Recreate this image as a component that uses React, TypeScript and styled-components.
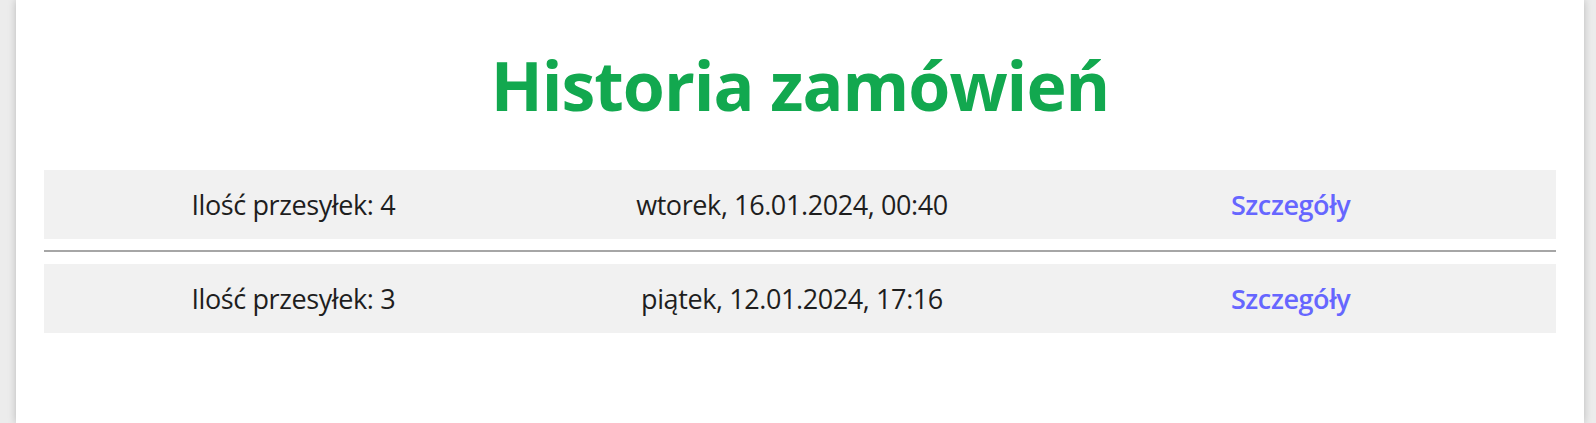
import styled, { createGlobalStyle } from "styled-components";

const orders = [
  { id: 1, count: 4, date: "wtorek, 16.01.2024, 00:40" },
  { id: 2, count: 3, date: "piątek, 12.01.2024, 17:16" },
];

export default function App() {
  return (
    <>
      <GlobalStyle />
      <Page>
        <Card>
          <Title>Historia zamówień</Title>
          <OrderList>
            {orders.map((order, i) => (
              <li key={order.id}>
                {i > 0 && <Divider />}
                <OrderRow>
                  <Cell>Ilość przesyłek: {order.count}</Cell>
                  <Cell>{order.date}</Cell>
                  <Cell>
                    <DetailsLink href="#">Szczegóły</DetailsLink>
                  </Cell>
                </OrderRow>
              </li>
            ))}
          </OrderList>
        </Card>
      </Page>
    </>
  );
}

const GlobalStyle = createGlobalStyle`
  html, body {
    margin: 0;
    padding: 0;
    background: #ececec;
    font-family: "Open Sans", "Noto Sans", sans-serif;
  }
`;

const Page = styled.main`
  display: flex;
  min-height: 423px;
  padding: 0 12px 0 16px;
  box-sizing: border-box;
`;

const Card = styled.section`
  flex: 1;
  background: #fff;
  box-shadow: 0 0 8px rgba(0, 0, 0, 0.22);
  padding: 51px 28px 0 28px;
`;

const Title = styled.h1`
  margin: 0 0 51px 0;
  text-align: center;
  font-size: 68px;
  line-height: 68px;
  letter-spacing: -1px;
  font-weight: 700;
  color: #12a84f;
`;

const OrderList = styled.ul`
  list-style: none;
  margin: 0;
  padding: 0;
`;

const Divider = styled.hr`
  margin: 11px 0 12px 0;
  border: none;
  border-top: 2px solid #a6a6a6;
`;

const OrderRow = styled.div`
  display: grid;
  grid-template-columns: repeat(3, 1fr);
  align-items: center;
  height: 69px;
  padding-right: 16px;
  background: #f1f1f1;
`;

const Cell = styled.div`
  text-align: center;
  font-size: 27px;
  letter-spacing: -0.4px;
  color: #1e1e1e;
`;

const DetailsLink = styled.a`
  color: #6666ff;
  font-weight: 600;
  text-decoration: none;
  cursor: pointer;
`;
